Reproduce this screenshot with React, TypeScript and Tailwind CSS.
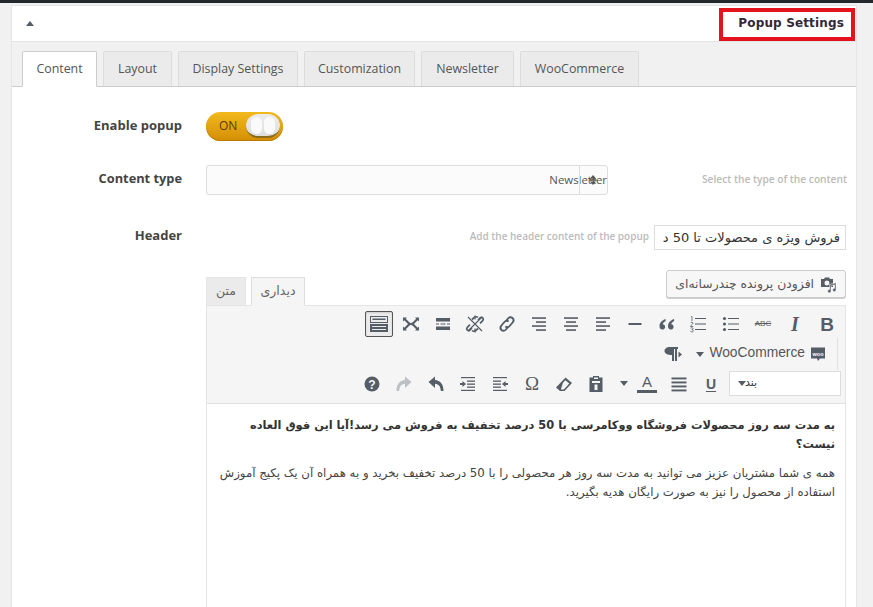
import React from "react";

const Ic = ({ children, w = 20, h = 20, cls = "" }: { children: React.ReactNode; w?: number; h?: number; cls?: string }) => (
  <svg width={w} height={h} viewBox="0 0 20 20" fill="#555d66" className={cls}>{children}</svg>
);

const Lines = ({ rows }: { rows: [number, number][] }) => (
  <>
    {rows.map(([x, w], i) => (
      <rect key={i} x={x} y={4 + i * (12 / (rows.length - 1)) - 0.75} width={w} height="1.6" />
    ))}
  </>
);

const row1: React.ReactNode[] = [
  <span className="font-['Liberation_Sans',sans-serif] font-bold text-[19px] leading-none text-[#555d66]">B</span>,
  <span className="font-['Liberation_Serif',serif] font-bold italic text-[20px] leading-none text-[#555d66]">I</span>,
  <span className="font-['Liberation_Sans',sans-serif] text-[8px] leading-none text-[#555d66] line-through">ABC</span>,
  <Ic><circle cx="3.5" cy="4.5" r="1.6" /><circle cx="3.5" cy="10" r="1.6" /><circle cx="3.5" cy="15.5" r="1.6" /><rect x="7" y="4" width="11" height="1" /><rect x="7" y="9.5" width="11" height="1" /><rect x="7" y="15" width="11" height="1" /></Ic>,
  <Ic><g fill="none" stroke="#555d66" strokeWidth="0.800"><path d="M2 3.200l1-.7v4.500" /><path d="M1.500 9c.3-1 2.500-1 2.500.2 0 1-2.500 2-2.500 3.300h2.800" /><path d="M1.600 14.200c.5-.7 2.500-.7 2.500.5 0 .7-.8 1-1.300 1 .6 0 1.500.3 1.500 1.200 0 1.300-2.200 1.300-2.800.5" /></g><rect x="6" y="4" width="11" height="1" /><rect x="6" y="9.500" width="11" height="1" /><rect x="6" y="15" width="11" height="1" /></Ic>,
  <Ic><path d="M8.5 5C5 6.200 2.500 8.700 2.500 12.200c0 2 1.200 3.300 2.900 3.300 1.600 0 2.700-1.100 2.700-2.600 0-1.500-1-2.500-2.400-2.600.3-1.400 1.300-2.500 3-3.300zM17 5c-3.500 1.200-6 3.700-6 7.200 0 2 1.200 3.300 2.900 3.300 1.600 0 2.700-1.100 2.700-2.600 0-1.500-1-2.500-2.400-2.600.3-1.400 1.300-2.500 3-3.300z" /></Ic>,
  <Ic><rect x="3.500" y="9" width="13" height="2" /></Ic>,
  <Ic><Lines rows={[[3, 14], [3, 10], [3, 14], [3, 10]]} /></Ic>,
  <Ic><Lines rows={[[3, 14], [5, 10], [3, 14], [5, 10]]} /></Ic>,
  <Ic><Lines rows={[[3, 14], [7, 10], [3, 14], [7, 10]]} /></Ic>,
  <Ic><g fill="none" stroke="#555d66" strokeWidth="1.900"><path d="M9 7l2-2.500c1.300-1.500 3.200-1.700 4.500-.5s1.300 3 .1 4.500l-3 3.500c-1.200 1.400-3 1.500-4.200.6" /><path d="M11 13l-2 2.500c-1.300 1.500-3.200 1.700-4.500.5s-1.300-3-.1-4.500l3-3.500c1.200-1.400 3-1.500 4.200-.6" /></g></Ic>,
  <Ic><g fill="none" stroke="#555d66" strokeWidth="1.700"><path d="M7 5.500l2-1.800c1.300-1.200 3-1.200 3.900-.2M13 6l2-2c1-.9 2.400-.9 3 .1.600 1 .3 2-.5 2.800l-2.500 2.500" /><path d="M13 14.500l-2 1.800c-1.300 1.200-3 1.200-3.900.2M7 14l-2 2c-1 .9-2.400.9-3-.1-.6-1-.3-2 .5-2.800L5 10.600" /><path d="M3 3l14 14M17 3L3 17M10 1.500v4M10 14.500v4" strokeWidth="1.200" /></g></Ic>,
  <Ic><path d="M3 4h14v3.500H3zM3 12.500h14V16H3z" /><path d="M3 9.500h3v1H3zM7.500 9.500h5v1h-5zM14 9.500h3v1h-3z" /></Ic>,
  <Ic><path d="M2 3.500h4L4.800 4.800 8 8 10 9.300 12 8l3.200-3.200L14 3.500h4v4l-1.300-1.200L13.500 9.500 12.800 10l.7.500 3.200 3.200L18 12.500v4h-4l1.200-1.300L12 12l-2-1.300L8 12l-3.200 3.200L6 16.500H2v-4l1.300 1.200 3.200-3.200.7-.5-.7-.5-3.200-3.200L2 7.500z" /></Ic>,
];

const row3: React.ReactNode[] = [
  <span className="font-['Liberation_Sans',sans-serif] font-bold text-[14px] leading-[14px] text-[#555d66] underline underline-offset-2">U</span>,
  <Ic><rect x="2.500" y="3.500" width="15" height="1.900" /><rect x="2.500" y="7.500" width="15" height="1.900" /><rect x="2.500" y="11.500" width="15" height="1.900" /><rect x="2.500" y="15.500" width="15" height="1.900" /></Ic>,
  <div className="flex flex-col items-center"><span className="font-['Liberation_Sans',sans-serif] text-[15px] leading-[15px] text-[#555d66]">A</span><span className="block w-5 h-[3px] bg-[#555d66] mt-[1px]" /></div>,
];

const row3b: React.ReactNode[] = [
  <Ic><path d="M7 3.500V2h6v1.500h3.500V18h-13V3.500zM8 3.500v1.500h4V3.500zM6 7v2h8V7zM8.500 10.500v5.500h3v-5.500z" fillRule="evenodd" /></Ic>,
  <Ic><path d="M11.500 3.500L18 9l-7.500 8H6l-4-3.500zM6.800 15.500h3l5.500-6-4-3.300-2.300 2.500z" fillRule="evenodd" /></Ic>,
  <span className="font-['Liberation_Serif',serif] text-[19px] leading-none text-[#555d66]">Ω</span>,
  <Ic><rect x="3" y="3" width="14" height="1.200" /><rect x="3" y="15.800" width="14" height="1.200" /><rect x="3" y="6.500" width="8" height="1.300" /><rect x="3" y="9.500" width="8" height="1.300" /><rect x="3" y="12.500" width="8" height="1.300" /><path d="M12 10l3.500-3v2H18v2h-2.500v2z" /></Ic>,
  <Ic><rect x="3" y="3" width="14" height="1.200" /><rect x="3" y="15.800" width="14" height="1.200" /><rect x="9" y="6.500" width="8" height="1.300" /><rect x="9" y="9.500" width="8" height="1.300" /><rect x="9" y="12.500" width="8" height="1.300" /><path d="M8 10L4.500 7v2H2v2h2.500v2z" /></Ic>,
  <Ic><path d="M2.500 8L9 2.500v3.600c5 .4 8.500 4 8.500 10.900h-2.600c-.4-4.400-2-6.800-5.900-7.200V14z" /></Ic>,
  <Ic><path d="M17.500 8L11 2.500v3.600c-5 .4-8.500 4-8.500 10.900h2.600c.4-4.400 2-6.800 5.900-7.200V14z" fill="#bcc0c4" /></Ic>,
  <svg width="16" height="16" viewBox="0 0 16 16"><circle cx="8" cy="8" r="7.500" fill="#555d66" /><text x="8" y="12.500" textAnchor="middle" fontSize="12" fontWeight="700" fontFamily="Liberation Sans" fill="#f5f5f5">?</text></svg>,
];

const TB = ({ children }: { children: React.ReactNode }) => (
  <div className="w-8 h-7 flex items-center justify-center shrink-0">{children}</div>
);

const Caret = () => <span className="block w-0 h-0 border-x-[4px] border-x-transparent border-t-[5px] border-t-[#555d66]" />;

const tabCls = "h-[35px] rounded-t-[2px] flex items-center justify-center border border-b-0 border-[#ddd] bg-[#ebebeb]";

export default function App() {
  return (
    <div className="w-[873px] h-[607px] overflow-hidden bg-[#f1f1f1] relative font-['Open_Sans',sans-serif] text-[#444]">
      <div className="h-[3px] bg-[#23282d]" />
      <div className="ml-[11px] mr-[16px] mt-[2px] border border-[#e5e5e5] bg-white h-[640px]">
        <div className="h-[36px] bg-white border-b border-[#e5e5e5] flex items-center pl-[14px]">
          <span className="w-0 h-0 border-x-[4px] border-x-transparent border-b-[5px] border-b-[#555d66]" />
        </div>
        <div className="h-[45px] bg-[#f1f1f1] border-b border-[#ccc] flex items-end gap-[6px] pl-[10px] text-[12.4px] text-[#555]">
          <div className="h-[36px] -mb-px rounded-t-[2px] bg-white border border-[#ccc] border-b-white flex items-center justify-center w-[75px]">Content</div>
          <div className={tabCls + " w-[69px]"}>Layout</div>
          <div className={tabCls + " w-[120px]"}>Display Settings</div>
          <div className={tabCls + " w-[111px]"}>Customization</div>
          <div className={tabCls + " w-[93px]"}>Newsletter</div>
          <div className={tabCls + " w-[119px]"}>WooCommerce</div>
        </div>

        <div className="flex items-center h-[78px]">
          <div className="w-[170px] text-right font-bold text-[13px] leading-none mb-[1px]">Enable popup</div>
          <div className="ml-[24px] w-[77px] h-[29px] rounded-full bg-gradient-to-b from-[#f2b91c] to-[#d48f05] flex items-center justify-between pl-[13px] pr-[3px] shadow-[inset_0_-1px_1px_#b87a00]">
            <span className="text-[12px] text-[#5a3d08]">ON</span>
            <span className="w-[34px] h-[24px] rounded-full bg-gradient-to-b from-[#ececec] to-[#dedede] border-b-2 border-[#8a6a1c] flex items-center justify-center gap-[2px]">
              <span className="w-[11px] h-[17px] rounded-full bg-[#fafafa]" />
              <span className="w-[11px] h-[17px] rounded-full bg-[#fafafa]" />
            </span>
          </div>
        </div>

        <div className="flex items-center h-[30px]">
          <div className="w-[170px] text-right font-bold text-[12.8px] leading-none mb-[3px]">Content type</div>
          <div className="ml-[24px] w-[402px] h-[30px] border border-[#ddd] rounded-[3px] bg-[#fbfbfb] relative flex items-center justify-end text-[11.4px] text-[#555]">
            Newsletter
            <div className="absolute right-[27px] top-0 bottom-0 w-px bg-[#ddd]" />
            <svg width="8" height="10" viewBox="0 0 8 10" fill="#555" className="absolute right-[10px] top-[9px]"><path d="M4 0l3 3.500H1zM4 10L1 6.500h6z" /><rect x="0.500" y="4" width="7" height="0.800" /><rect x="0.500" y="5.200" width="7" height="0.800" /></svg>
          </div>
          <div className="flex-1 text-right text-[10.2px] font-semibold text-[#bbb] pr-[9px]">Select the type of the content</div>
        </div>

        <div className="flex items-start h-[45px] mt-[30px]">
          <div className="w-[170px] text-right font-bold text-[13px] leading-[20px]">Header</div>
          <div className="flex-1 flex justify-end items-center pr-[10px] gap-[5px]">
            <span className="text-[10px] font-semibold text-[#bbb] -mt-[2px]">Add the header content of the popup</span>
            <div dir="rtl" className="w-[192px] h-[25px] overflow-hidden whitespace-nowrap border border-[#ddd] bg-white px-[5px] text-[13px] leading-[23px] text-[#333] font-['DejaVu_Sans',sans-serif]">فروش ویژه ی محصولات تا 50 د</div>
          </div>
        </div>

        <div className="ml-[194px] mr-[10px] flex items-end justify-between h-[35px]">
          <div className="flex items-end gap-[5px] -mb-px relative z-10">
            <div className="w-[40px] h-[28px] mb-px bg-[#ebebeb] border border-[#e5e5e5] border-b-0 flex items-center justify-center text-[12.5px] text-[#666] font-['DejaVu_Sans',sans-serif]">متن</div>
            <div className="w-[54px] h-[29px] bg-[#f5f5f5] border border-[#ddd] border-b-[#f5f5f5] flex items-center justify-center text-[12.5px] text-[#666] font-['DejaVu_Sans',sans-serif]">دیداری</div>
          </div>
          <div dir="rtl" className="mb-[7px] w-[180px] h-[28px] border border-[#ccc] rounded-[3px] bg-[#f7f7f7] shadow-[0_1px_0_#ccc] flex items-center pr-[8px] gap-[6px] text-[12.4px] text-[#555] font-['DejaVu_Sans',sans-serif]">
            <svg width="17" height="17" viewBox="0 0 17 17" fill="#555d66" className="shrink-0"><path d="M1 3h3l1-1.500h4L10 3h3v8H1zM7 4.500a2.500 2.500 0 100 5 2.500 2.500 0 000-5z" fillRule="evenodd" /><path d="M9.500 8.500l6.500-1.800v7.300a1.700 1.700 0 11-1.500-1.700V8.800l-3.500 1v5.400a1.700 1.700 0 11-1.500-1.700z" stroke="#f7f7f7" strokeWidth="0.600" /></svg>
            <span className="whitespace-nowrap">افزودن پرونده چندرسانه‌ای</span>
          </div>
        </div>

        <div className="ml-[194px] mr-[10px] border border-[#e5e5e5]">
          <div className="bg-[#f5f5f5] h-[98px] border-b border-[#e0e0e0]" dir="rtl">
            <div className="flex items-center h-[32px] pr-[2px] pt-[4px]">
              {row1.map((n, i) => <TB key={i}>{n}</TB>)}
              <div className="w-[28px] h-[26px] mr-[2px] border border-[#555] rounded-[2px] bg-[#ebebeb] shadow-[inset_0_1px_2px_#ccc] flex items-center justify-center shrink-0">
                <Ic><rect x="1.500" y="2.500" width="17" height="6" fill="none" stroke="#555d66" /><rect x="1" y="10" width="18" height="8" /><path d="M3.500 4.500h13v1.500h-13z" /><path d="M3 12h14v1H3zM3 15h14v1H3z" fill="#ebebeb" /></Ic>
              </div>
            </div>
            <div className="flex items-center h-[32px] pr-[7px]">
              <div className="h-[32px] w-px bg-[#e0e0e0] shrink-0" />
              <svg width="16" height="16" viewBox="0 0 16 16" className="mr-[11px] shrink-0"><path d="M1 1.500h14v11H10l-2 2.500-1-2.500H1z" fill="#555d66" /><text x="8" y="9.500" textAnchor="middle" fontSize="5.500" fontWeight="700" fontFamily="Liberation Sans" fill="#fff">woo</text></svg>
              <span className="mr-[5px] -mt-[1px] font-['Liberation_Sans',sans-serif] text-[13.8px] text-[#555] whitespace-nowrap" dir="ltr">WooCommerce</span>
              <span className="mr-[5px]"><Caret /></span>
              <svg width="20" height="18" viewBox="0 0 20 18" fill="#555d66" className="mr-[14px] shrink-0"><path d="M8 2h8v2h-1v12h-2V4h-1v12H10v-6C5.500 10 2.500 8.500 2.500 6S5 2 8 2z" /><path d="M16.500 6.500l3.500 3-3.500 3z" /></svg>
            </div>
            <div className="flex items-center h-[27px] pr-[4px]">
              <div className="w-[112px] h-[25px] border border-[#ddd] bg-white text-[11px] text-[#333] relative font-['DejaVu_Sans',sans-serif] shrink-0">
                <span className="absolute left-[15px] top-[4px] leading-[14px]">بند</span>
                <span className="absolute left-[8px] top-[9px]"><Caret /></span>
              </div>
              <div className="w-[2px] shrink-0" />
              {row3.map((n, i) => <TB key={i}>{n}</TB>)}
              <div className="w-[14px] flex justify-center shrink-0"><Caret /></div>
              <div className="mr-[5px] flex items-center">
                {row3b.map((n, i) => <TB key={i}>{n}</TB>)}
              </div>
            </div>
          </div>
          <div dir="rtl" className="bg-white h-[220px] px-[10px] pt-[12px] text-[#333] font-['DejaVu_Sans',sans-serif]">
            <p className="font-bold text-[11.4px] leading-[19px]">به مدت سه روز محصولات فروشگاه ووکامرسی با 50 درصد تخفیف به فروش می رسد!آیا این فوق العاده نیست؟</p>
            <p className="mt-[10px] text-[11.75px] leading-[19px] text-[#444]">همه ی شما مشتریان عزیز می توانید به مدت سه روز هر محصولی را با 50 درصد تخفیف بخرید و به همراه آن یک پکیج آموزش استفاده از محصول را نیز به صورت رایگان هدیه بگیرید.</p>
          </div>
        </div>
      </div>

      <div className="absolute left-[719px] top-[8px] w-[136px] h-[33px] border-[4px] border-[#e4141f] flex items-center justify-end pr-[7px]">
        <span className="font-['DejaVu_Sans',sans-serif] font-bold text-[12px] text-[#32293a] tracking-[0.15px] whitespace-nowrap leading-none -mt-[3px]">Popup Settings</span>
      </div>
    </div>
  );
}
